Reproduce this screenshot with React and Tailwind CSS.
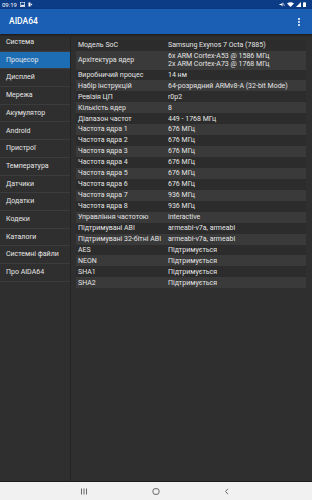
import { EllipsisVertical } from 'lucide-react';

const menu = [
  'Система',
  'Процесор',
  'Дисплей',
  'Мережа',
  'Акумулятор',
  'Android',
  'Пристрої',
  'Температура',
  'Датчики',
  'Додатки',
  'Кодеки',
  'Каталоги',
  'Системні файли',
  'Про AIDA64',
];

const rows = [
  ['Модель SoC', ['Samsung Exynos 7 Octa (7885)']],
  ['Архітектура ядер', ['6x ARM Cortex-A53 @ 1586 МГц', '2x ARM Cortex-A73 @ 1768 МГц']],
  ['Виробничий процес', ['14 нм']],
  ['Набір інструкцій', ['64-розрядний ARMv8-A (32-bit Mode)']],
  ['Ревізія ЦП', ['r0p2']],
  ['Кількість ядер', ['8']],
  ['Діапазон частот', ['449 - 1768 МГц']],
  ['Частота ядра 1', ['676 МГц']],
  ['Частота ядра 2', ['676 МГц']],
  ['Частота ядра 3', ['676 МГц']],
  ['Частота ядра 4', ['676 МГц']],
  ['Частота ядра 5', ['676 МГц']],
  ['Частота ядра 6', ['676 МГц']],
  ['Частота ядра 7', ['936 МГц']],
  ['Частота ядра 8', ['936 МГц']],
  ['Управління частотою', ['interactive']],
  ['Підтримувані ABI', ['armeabi-v7a, armeabi']],
  ['Підтримувані 32-бітні ABI', ['armeabi-v7a, armeabi']],
  ['AES', ['Підтримується']],
  ['NEON', ['Підтримується']],
  ['SHA1', ['Підтримується']],
  ['SHA2', ['Підтримується']],
];

function StatusBar() {
  return (
    <div className="h-[9px] bg-[#0c3c86] flex items-center justify-between px-[2px] text-white">
      <div className="flex items-center gap-[3px] text-[6px] leading-none">
        <span>09:19</span>
        <svg width="5" height="5" viewBox="0 0 10 10">
          <rect x="0.5" y="0.5" width="9" height="9" fill="none" stroke="white" strokeWidth="1.2" />
          <path d="M1 8 L4 5 L6 7 L9 4 L9 9 L1 9 Z" fill="white" />
        </svg>
        <svg width="5" height="5" viewBox="0 0 10 10">
          <path d="M1 1 L5 1 L5 9 L1 9 Z" fill="white" />
          <path d="M6 3 L9 5 L6 7 Z" fill="white" />
        </svg>
      </div>
      <div className="flex items-center gap-[2px] pr-[4px]">
        <svg width="6" height="5" viewBox="0 0 12 10">
          <path d="M1 4 L4 4 L7 1 L7 9 L4 6 L1 6 Z" fill="white" />
          <path d="M8 2 L11 8" stroke="white" strokeWidth="1.2" />
        </svg>
        <svg width="7" height="5" viewBox="0 0 14 10">
          <path d="M0 3 Q7 -2 14 3 L7 10 Z" fill="white" />
        </svg>
        <svg width="5" height="5" viewBox="0 0 10 10">
          <path d="M10 0 L10 10 L0 10 Z" fill="white" />
        </svg>
        <svg width="3" height="5" viewBox="0 0 6 10">
          <rect x="0" y="1" width="6" height="9" fill="white" />
          <rect x="2" y="0" width="2" height="1" fill="white" />
        </svg>
      </div>
    </div>
  );
}

export default function App() {
  return (
    <div
      className="w-[312px] h-[500px] flex flex-col bg-[#2f2f2f] overflow-hidden"
      style={{ fontFamily: 'Roboto, "Noto Sans", sans-serif' }}
    >
      <StatusBar />
      <div className="h-[25px] bg-[#1a5fb4] flex items-center justify-between pl-[9px] pr-[8px] text-white shadow-[0_1px_2px_rgba(0,0,0,0.5)]">
        <span className="text-[8.5px] font-medium">AIDA64</span>
        <EllipsisVertical size={10} strokeWidth={3} />
      </div>
      <div className="flex-1 flex min-h-0">
        <div className="w-[71px] border-r border-[#242424] text-[#e6e6e6] text-[7px]">
          {menu.map((m) => (
            <div
              key={m}
              className={
                m === 'Процесор'
                  ? 'h-[17.7px] flex items-center pl-[6px] bg-[#1d6db5] border-b border-[#3c3c3c]'
                  : 'h-[17.7px] flex items-center pl-[6px] border-b border-[#3c3c3c]'
              }
            >
              {m}
            </div>
          ))}
        </div>
        <div className="flex-1 pt-[6px] pl-[5px] pr-[6px] text-[#e4e4e4] text-[7px] leading-[8.5px]">
          {rows.map(([label, vals], i) => (
            <div
              key={label}
              className={
                i % 2 === 1
                  ? 'flex items-center bg-[#3a3a3a] pl-[2px] ' + (vals.length > 1 ? 'h-[18.6px]' : 'h-[10.95px]')
                  : 'flex items-center bg-[#2c2c2c] pl-[2px] ' + (vals.length > 1 ? 'h-[18.6px]' : 'h-[10.95px]')
              }
            >
              <div className="w-[90px] shrink-0 whitespace-nowrap">{label}</div>
              <div className="whitespace-nowrap">
                {vals.map((v) => (
                  <div key={v}>{v}</div>
                ))}
              </div>
            </div>
          ))}
        </div>
      </div>
      <div className="h-[19px] bg-[#f1f1f1] border-t border-[#1c1c1c] flex items-center text-[#666]">
        <div className="flex-1 flex justify-end pr-[4px]">
          <svg width="8" height="7" viewBox="0 0 8 7">
            <path d="M1.5 0.5 V6.5 M4 0.5 V6.5 M6.5 0.5 V6.5" stroke="#666" strokeWidth="1" />
          </svg>
        </div>
        <div className="w-[128px] flex justify-center">
          <svg width="8" height="7" viewBox="0 0 8 7">
            <rect x="1" y="0.7" width="6" height="5.6" rx="2" fill="none" stroke="#666" strokeWidth="1" />
          </svg>
        </div>
        <div className="flex-1 flex justify-start pl-[4px]">
          <svg width="6" height="7" viewBox="0 0 6 7">
            <path d="M4 0.8 L1.5 3.5 L4 6.2" fill="none" stroke="#666" strokeWidth="1" />
          </svg>
        </div>
      </div>
    </div>
  );
}
